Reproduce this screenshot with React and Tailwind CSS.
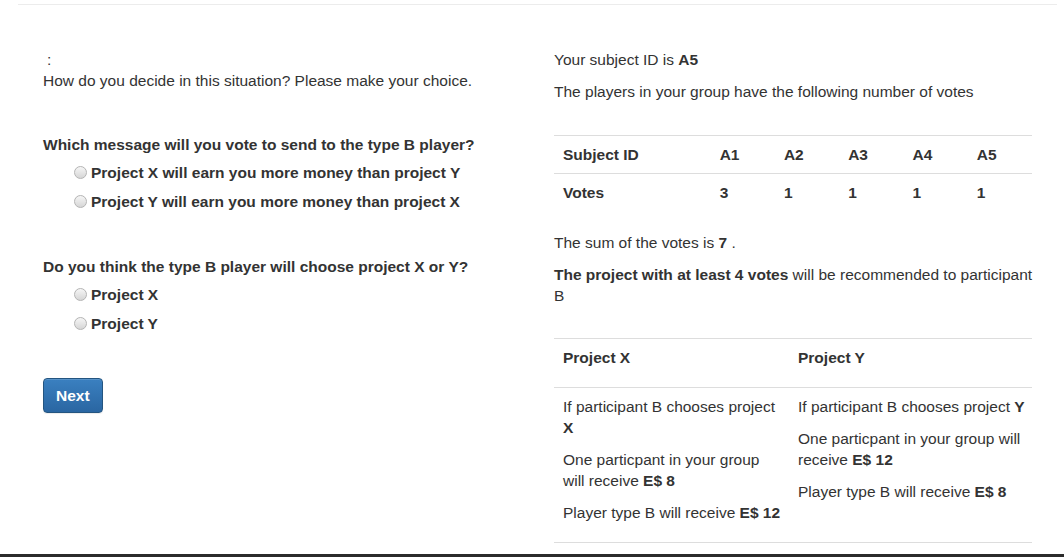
import React from 'react';

const votes = [
  { id: 'A1', votes: 3 },
  { id: 'A2', votes: 1 },
  { id: 'A3', votes: 1 },
  { id: 'A4', votes: 1 },
  { id: 'A5', votes: 1 },
];

const RadioOption = ({ name, value, label }) => (
  <label className="flex items-center h-[29px] pl-[31px] font-bold cursor-pointer">
    <input
      type="radio"
      name={name}
      value={value}
      className="appearance-none w-[13px] h-[13px] rounded-full border border-[#b4b4b4] bg-gradient-to-b from-[#f6f6f6] to-[#d6d6d6] mr-[4px] shrink-0"
    />
    <span>{label}</span>
  </label>
);

const App = () => {
  return (
    <div className="h-[557px] flex flex-col bg-white text-[#333] text-[15.5px] leading-[21px] font-['Liberation_Sans',Arial,sans-serif] overflow-hidden">
      {/* top rule */}
      <div className="mt-[4px] ml-[18px] w-[1039px] h-px bg-[#ececec]" />

      <div className="flex-1 flex pt-[44px]">
        {/* Left column: decision */}
        <div className="w-[554px] shrink-0 pl-[43px] pr-[20px]">
          <p className="pl-[4px]">:</p>
          <p>How do you decide in this situation? Please make your choice.</p>

          <div className="mt-[43px]">
            <p className="font-bold">Which message will you vote to send to the type B player?</p>
            <div className="mt-[3px]">
              <RadioOption name="message" value="X" label="Project X will earn you more money than project Y" />
              <RadioOption name="message" value="Y" label="Project Y will earn you more money than project X" />
            </div>
          </div>

          <div className="mt-[40px]">
            <p className="font-bold">Do you think the type B player will choose project X or Y?</p>
            <div className="mt-[3px]">
              <RadioOption name="guess" value="X" label="Project X" />
              <RadioOption name="guess" value="Y" label="Project Y" />
            </div>
          </div>

          <button className="mt-[40px] px-[12px] py-[6px] rounded-[4px] border border-[#245580] bg-gradient-to-b from-[#3a80c0] to-[#2a66a2] text-white font-bold shadow-[inset_0_1px_0_rgba(255,255,255,0.15),0_1px_1px_rgba(0,0,0,0.075)]">
            Next
          </button>
        </div>

        {/* Right column: info */}
        <div className="w-[478px] shrink-0">
          <p className="mb-[11px]">
            Your subject ID is <b>A5</b>
          </p>
          <p>The players in your group have the following number of votes</p>

          <table className="mt-[33px] w-[478px] table-fixed border-t border-[#ddd] font-bold">
            <colgroup>
              <col className="w-[156px]" />
              {votes.map((v) => (
                <col key={v.id} className="w-[64px]" />
              ))}
            </colgroup>
            <tbody>
              <tr className="border-b border-[#ddd]">
                <td className="px-[9px] py-[8px]">Subject ID</td>
                {votes.map((v) => (
                  <td key={v.id} className="px-[9px] py-[8px]">{v.id}</td>
                ))}
              </tr>
              <tr>
                <td className="px-[9px] py-[8px]">Votes</td>
                {votes.map((v) => (
                  <td key={v.id} className="px-[9px] py-[8px]">{v.votes}</td>
                ))}
              </tr>
            </tbody>
          </table>

          <p className="mt-[21px] mb-[11px]">
            The sum of the votes is <b>7</b> .
          </p>
          <p className="w-[492px]">
            <b>The project with at least 4 votes</b> will be recommended to participant B
          </p>

          <table className="mt-[32px] w-[478px] table-fixed border-t border-b border-[#ddd]">
            <colgroup>
              <col className="w-[235px]" />
              <col className="w-[243px]" />
            </colgroup>
            <thead>
              <tr className="border-b border-[#ddd]">
                <th className="text-left font-bold pl-[9px] pr-[6px] py-[8px] align-top">
                  <p className="mb-[11px]">Project X</p>
                </th>
                <th className="text-left font-bold pl-[9px] pr-[6px] py-[8px] align-top">
                  <p className="mb-[11px]">Project Y</p>
                </th>
              </tr>
            </thead>
            <tbody>
              <tr>
                <td className="pl-[9px] pr-[6px] py-[8px] align-top">
                  <p className="mb-[11px]">If participant B chooses project <b>X</b></p>
                  <p className="mb-[11px]">One particpant in your group will receive <b>E$ 8</b></p>
                  <p className="mb-[11px]">Player type B will receive <b>E$ 12</b></p>
                </td>
                <td className="pl-[9px] pr-[6px] py-[8px] align-top">
                  <p className="mb-[11px]">If participant B chooses project <b>Y</b></p>
                  <p className="mb-[11px]">One particpant in your group will receive <b>E$ 12</b></p>
                  <p className="mb-[11px]">Player type B will receive <b>E$ 8</b></p>
                </td>
              </tr>
            </tbody>
          </table>
        </div>
      </div>

      {/* bottom strip */}
      <div className="h-[3px] bg-[#2b2b2b]" />
    </div>
  );
};

export default App;
